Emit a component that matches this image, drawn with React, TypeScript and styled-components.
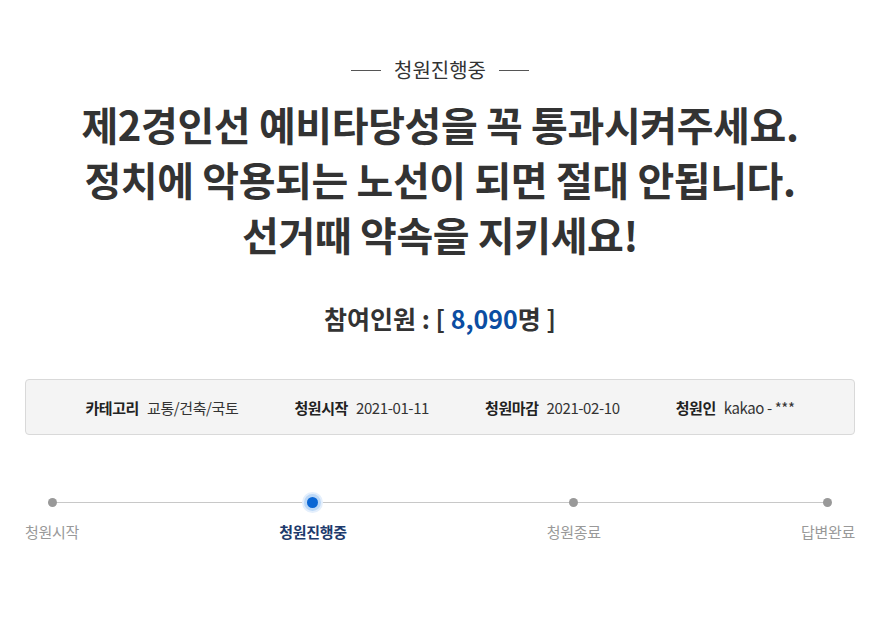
import React from "react";
import styled, { createGlobalStyle } from "styled-components";

const GlobalStyle = createGlobalStyle`
  html, body {
    margin: 0;
    padding: 0;
    background: #ffffff;
  }
  body {
    font-family: "Noto Sans CJK KR", "Noto Sans", sans-serif;
    color: #333333;
  }
`;

const Page = styled.div`
  width: 882px;
  padding: 55px 27px 0 25px;
  box-sizing: border-box;
`;

const Status = styled.div`
  display: flex;
  align-items: center;
  justify-content: center;
  gap: 13px;
  font-size: 20px;
  line-height: 30px;
  color: #333333;

  &::before,
  &::after {
    content: "";
    width: 30px;
    height: 1px;
    background: #555555;
  }
`;

const Title = styled.h1`
  margin: 12px 0 0;
  text-align: center;
  font-size: 40px;
  font-weight: 700;
  line-height: 55px;
  letter-spacing: -0.4px;
  color: #333333;
`;

const Count = styled.div`
  margin-top: 38px;
  text-align: center;
  font-size: 25px;
  font-weight: 700;
  line-height: 36px;
  color: #333333;
`;

const CountNumber = styled.span`
  color: #0b4da2;
`;

const InfoBox = styled.ul`
  margin: 43px 0 0;
  padding: 0;
  list-style: none;
  height: 56px;
  box-sizing: border-box;
  display: flex;
  align-items: center;
  justify-content: center;
  gap: 56px;
  background: #f4f4f4;
  border: 1px solid #d9d9d9;
  border-radius: 4px;
`;

const InfoItem = styled.li`
  display: flex;
  align-items: center;
  gap: 8px;
  font-size: 15px;
  letter-spacing: -0.4px;
  color: #333333;
`;

const InfoLabel = styled.strong`
  font-weight: 700;
  color: #222222;
`;

const Steps = styled.div`
  position: relative;
  margin-top: 61px;
  display: flex;
  justify-content: space-between;

  &::before {
    content: "";
    position: absolute;
    top: 6px;
    left: 26px;
    right: 28px;
    height: 1px;
    background: #c8c8c8;
  }
`;

const Step = styled.div<{ $active?: boolean }>`
  position: relative;
  display: flex;
  flex-direction: column;
  align-items: center;
  gap: 14px;
  font-size: 15px;
  line-height: 20px;
  letter-spacing: -0.3px;
  font-weight: ${(p) => (p.$active ? 700 : 400)};
  color: ${(p) => (p.$active ? "#1d3a6c" : "#999999")};
`;

const Dot = styled.span<{ $active?: boolean }>`
  width: ${(p) => (p.$active ? 11 : 9)}px;
  height: ${(p) => (p.$active ? 11 : 9)}px;
  margin: ${(p) => (p.$active ? "1px 0 0" : "2px 0 1px")};
  border-radius: 50%;
  background: ${(p) => (p.$active ? "#0a66d4" : "#999999")};
  box-shadow: ${(p) =>
    p.$active ? "0 0 0 3px #bcd8f7, 0 0 0 5px #e4effc" : "none"};
`;

const info = [
  { label: "카테고리", value: "교통/건축/국토" },
  { label: "청원시작", value: "2021-01-11" },
  { label: "청원마감", value: "2021-02-10" },
  { label: "청원인", value: "kakao - ***" },
];

const steps = [
  { name: "청원시작" },
  { name: "청원진행중", active: true },
  { name: "청원종료" },
  { name: "답변완료" },
];

export default function App() {
  return (
    <>
      <GlobalStyle />
      <Page>
        <Status>청원진행중</Status>
        <Title>
          제2경인선 예비타당성을 꼭 통과시켜주세요.
          <br />
          정치에 악용되는 노선이 되면 절대 안됩니다.
          <br />
          선거때 약속을 지키세요!
        </Title>
        <Count>
          참여인원 : [ <CountNumber>8,090</CountNumber>명 ]
        </Count>
        <InfoBox>
          {info.map((item) => (
            <InfoItem key={item.label}>
              <InfoLabel>{item.label}</InfoLabel>
              <span>{item.value}</span>
            </InfoItem>
          ))}
        </InfoBox>
        <Steps>
          {steps.map((s) => (
            <Step key={s.name} $active={s.active}>
              <Dot $active={s.active} />
              {s.name}
            </Step>
          ))}
        </Steps>
      </Page>
    </>
  );
}
